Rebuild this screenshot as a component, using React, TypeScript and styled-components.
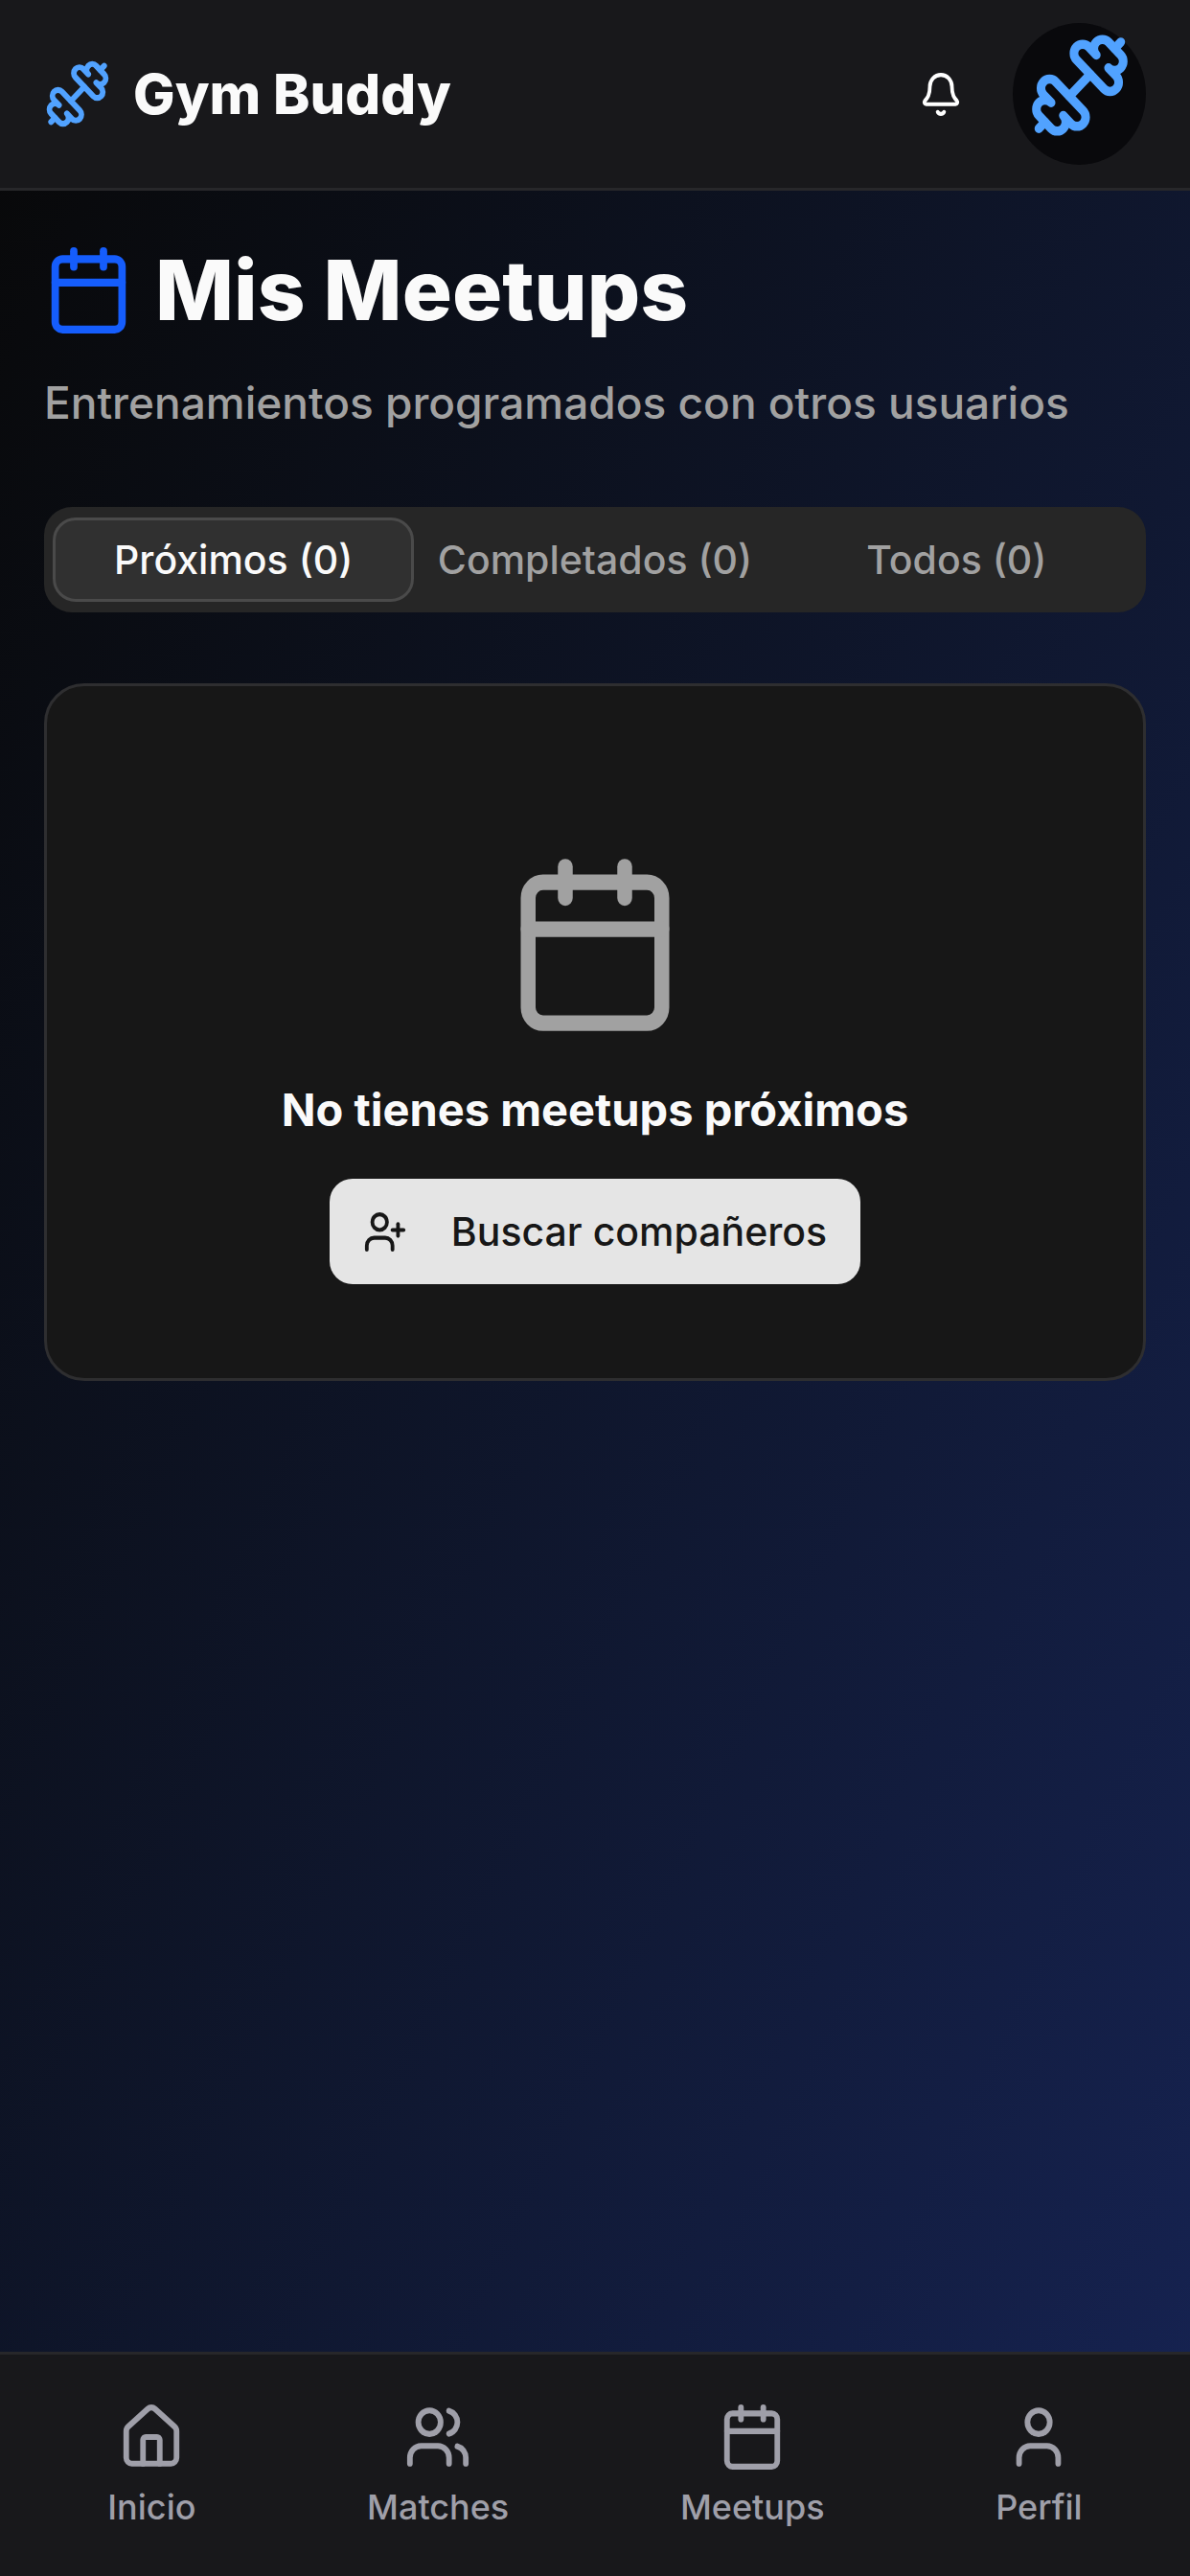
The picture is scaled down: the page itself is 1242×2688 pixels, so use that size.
import React, { useState } from "react";
import styled, { createGlobalStyle } from "styled-components";

const GlobalStyle = createGlobalStyle`
  *, *::before, *::after { box-sizing: border-box; }
  body {
    margin: 0;
    background: #0a0a0a;
    color: #fafafa;
    font-family: Inter, "Liberation Sans", sans-serif;
  }
  button { font-family: inherit; }
`;

const Page = styled.div`
  min-height: 100vh;
  display: flex;
  flex-direction: column;
  background: linear-gradient(to bottom right in oklab, #080808, #162353);
`;

const Header = styled.header`
  display: flex;
  align-items: center;
  justify-content: space-between;
  padding: 24px 46px;
  background: #18181b;
  border-bottom: 3px solid #27272a;
`;

const Brand = styled.a`
  display: flex;
  align-items: center;
  gap: 23px;
  color: #fafafa;
  text-decoration: none;
`;

const BrandName = styled.span`
  font-size: 58px;
  line-height: 72px;
  font-weight: 800;
`;

const HeaderActions = styled.div`
  display: flex;
  align-items: center;
  gap: 52px;
`;

const IconButton = styled.button`
  display: flex;
  padding: 0;
  border: 0;
  background: none;
  color: #ffffff;
  cursor: pointer;
`;

const Avatar = styled.button`
  display: flex;
  justify-content: center;
  align-items: flex-start;
  width: 139px;
  height: 148px;
  padding: 8px 0 0;
  border: 0;
  border-radius: 50%;
  background: #09090c;
  cursor: pointer;
`;

const Main = styled.main`
  flex: 1;
  display: flex;
  flex-direction: column;
  padding: 49px 46px;
`;

const TitleRow = styled.div`
  display: flex;
  align-items: center;
  gap: 23px;
  height: 110px;
`;

const Title = styled.h1`
  margin: 0;
  font-size: 87px;
  line-height: 110px;
  font-weight: 800;
`;

const Subtitle = styled.p`
  margin: 25px 0 0;
  font-size: 46px;
  line-height: 74px;
  font-weight: 500;
  color: #a1a1a1;
`;

const TabList = styled.div`
  display: grid;
  grid-template-columns: repeat(3, 1fr);
  margin-top: 72px;
  height: 110px;
  padding: 11px 9px;
  border-radius: 29px;
  background: #262626;
`;

const Tab = styled.button<{ $active: boolean }>`
  display: flex;
  align-items: center;
  justify-content: center;
  padding: 0;
  border: 3px solid ${(p) => (p.$active ? "#4a4a4a" : "transparent")};
  border-radius: 24px;
  background: ${(p) => (p.$active ? "#303030" : "transparent")};
  color: ${(p) => (p.$active ? "#fafafa" : "#a1a1a1")};
  font-size: 41px;
  line-height: 60px;
  font-weight: 500;
  white-space: nowrap;
  cursor: pointer;
`;

const Card = styled.section`
  display: flex;
  flex-direction: column;
  align-items: center;
  margin-top: 74px;
  padding: 172px 70px 98px;
  border: 3px solid #2e2e30;
  border-radius: 42px;
  background: #171717;
`;

const EmptyTitle = styled.h2`
  margin: 37px 0 0;
  font-size: 47px;
  line-height: 74px;
  font-weight: 700;
`;

const PrimaryButton = styled.button`
  display: flex;
  align-items: center;
  gap: 46px;
  height: 110px;
  margin-top: 35px;
  padding: 0 35px;
  border: 0;
  border-radius: 24px;
  background: #e5e5e5;
  color: #171717;
  font-size: 41px;
  line-height: 60px;
  font-weight: 500;
  cursor: pointer;
`;

const BottomNav = styled.nav`
  display: flex;
  justify-content: space-around;
  padding: 49px 23px 46px;
  border-top: 3px solid #27272a;
  background: #18181b;
`;

const NavLink = styled.a`
  display: flex;
  flex-direction: column;
  align-items: center;
  gap: 10px;
  color: #9f9fa9;
  font-size: 36px;
  line-height: 52px;
  font-weight: 500;
  text-decoration: none;
`;

const Svg = styled.svg`
  display: block;
  flex: none;
  fill: none;
  stroke: currentColor;
  stroke-width: 2;
  stroke-linecap: round;
  stroke-linejoin: round;
`;

const iconSizes = {
  small: [46, 49],
  medium: [70, 74],
  large: [93, 98],
  avatar: [108, 114],
  hero: [186, 196],
} as const;

type IconSize = keyof typeof iconSizes;

const glyphs = {
  dumbbell: (
    <>
      <path d="M17.596 12.768a2 2 0 1 0 2.829-2.829l-1.768-1.767a2 2 0 0 0 2.828-2.829l-2.828-2.828a2 2 0 0 0-2.829 2.828l-1.767-1.768a2 2 0 1 0-2.829 2.829z" />
      <path d="m2.5 21.5 1.4-1.4" />
      <path d="m20.1 3.9 1.4-1.4" />
      <path d="M5.343 21.485a2 2 0 1 0 2.829-2.828l1.767 1.768a2 2 0 1 0 2.829-2.829l-6.364-6.364a2 2 0 1 0-2.829 2.829l1.768 1.767a2 2 0 0 0-2.828 2.829z" />
      <path d="m9.6 14.4 4.8-4.8" />
    </>
  ),
  bell: (
    <>
      <path d="M10.268 21a2 2 0 0 0 3.464 0" />
      <path d="M3.262 15.326A1 1 0 0 0 4 17h16a1 1 0 0 0 .74-1.673C19.41 13.956 18 12.499 18 8A6 6 0 0 0 6 8c0 4.499-1.411 5.956-2.738 7.326" />
    </>
  ),
  calendar: (
    <>
      <path d="M8 2v4" />
      <path d="M16 2v4" />
      <rect width="18" height="18" x="3" y="4" rx="2" />
      <path d="M3 10h18" />
    </>
  ),
  userPlus: (
    <>
      <path d="M16 21v-2a4 4 0 0 0-4-4H6a4 4 0 0 0-4 4v2" />
      <circle cx="9" cy="7" r="4" />
      <path d="M19 8v6" />
      <path d="M22 11h-6" />
    </>
  ),
  house: (
    <>
      <path d="M15 21v-8a1 1 0 0 0-1-1h-4a1 1 0 0 0-1 1v8" />
      <path d="M3 10a2 2 0 0 1 .709-1.528l7-5.999a2 2 0 0 1 2.582 0l7 5.999A2 2 0 0 1 21 10v9a2 2 0 0 1-2 2H5a2 2 0 0 1-2-2z" />
    </>
  ),
  users: (
    <>
      <path d="M16 21v-2a4 4 0 0 0-4-4H6a4 4 0 0 0-4 4v2" />
      <path d="M16 3.128a4 4 0 0 1 0 7.744" />
      <path d="M22 21v-2a4 4 0 0 0-3-3.87" />
      <circle cx="9" cy="7" r="4" />
    </>
  ),
  user: (
    <>
      <path d="M19 21v-2a4 4 0 0 0-4-4H9a4 4 0 0 0-4 4v2" />
      <circle cx="12" cy="7" r="4" />
    </>
  ),
};

type IconName = keyof typeof glyphs;

function Icon({ name, size = "medium", color }: { name: IconName; size?: IconSize; color?: string }) {
  const [width, height] = iconSizes[size];
  return (
    <Svg viewBox="0 0 24 24" width={width} height={height} color={color} preserveAspectRatio="none" aria-hidden="true">
      {glyphs[name]}
    </Svg>
  );
}

const tabs = ["Próximos (0)", "Completados (0)", "Todos (0)"];

const links: { label: string; icon: IconName }[] = [
  { label: "Inicio", icon: "house" },
  { label: "Matches", icon: "users" },
  { label: "Meetups", icon: "calendar" },
  { label: "Perfil", icon: "user" },
];

export default function App() {
  const [active, setActive] = useState(0);
  return (
    <Page>
      <GlobalStyle />
      <Header>
        <Brand href="#inicio">
          <Icon name="dumbbell" color="#51a2ff" />
          <BrandName>Gym Buddy</BrandName>
        </Brand>
        <HeaderActions>
          <IconButton type="button" aria-label="Notificaciones">
            <Icon name="bell" size="small" />
          </IconButton>
          <Avatar type="button" aria-label="Cuenta">
            <Icon name="dumbbell" size="avatar" color="#51a2ff" />
          </Avatar>
        </HeaderActions>
      </Header>
      <Main>
        <TitleRow>
          <Icon name="calendar" size="large" color="#155dfc" />
          <Title>Mis Meetups</Title>
        </TitleRow>
        <Subtitle>Entrenamientos programados con otros usuarios</Subtitle>
        <TabList role="tablist">
          {tabs.map((label, i) => (
            <Tab key={label} type="button" role="tab" aria-selected={i === active} $active={i === active} onClick={() => setActive(i)}>
              {label}
            </Tab>
          ))}
        </TabList>
        <Card>
          <Icon name="calendar" size="hero" color="#a1a1a1" />
          <EmptyTitle>No tienes meetups próximos</EmptyTitle>
          <PrimaryButton type="button">
            <Icon name="userPlus" size="small" />
            Buscar compañeros
          </PrimaryButton>
        </Card>
      </Main>
      <BottomNav>
        {links.map(({ label, icon }) => (
          <NavLink key={label} href={`#${label.toLowerCase()}`}>
            <Icon name={icon} />
            {label}
          </NavLink>
        ))}
      </BottomNav>
    </Page>
  );
}
